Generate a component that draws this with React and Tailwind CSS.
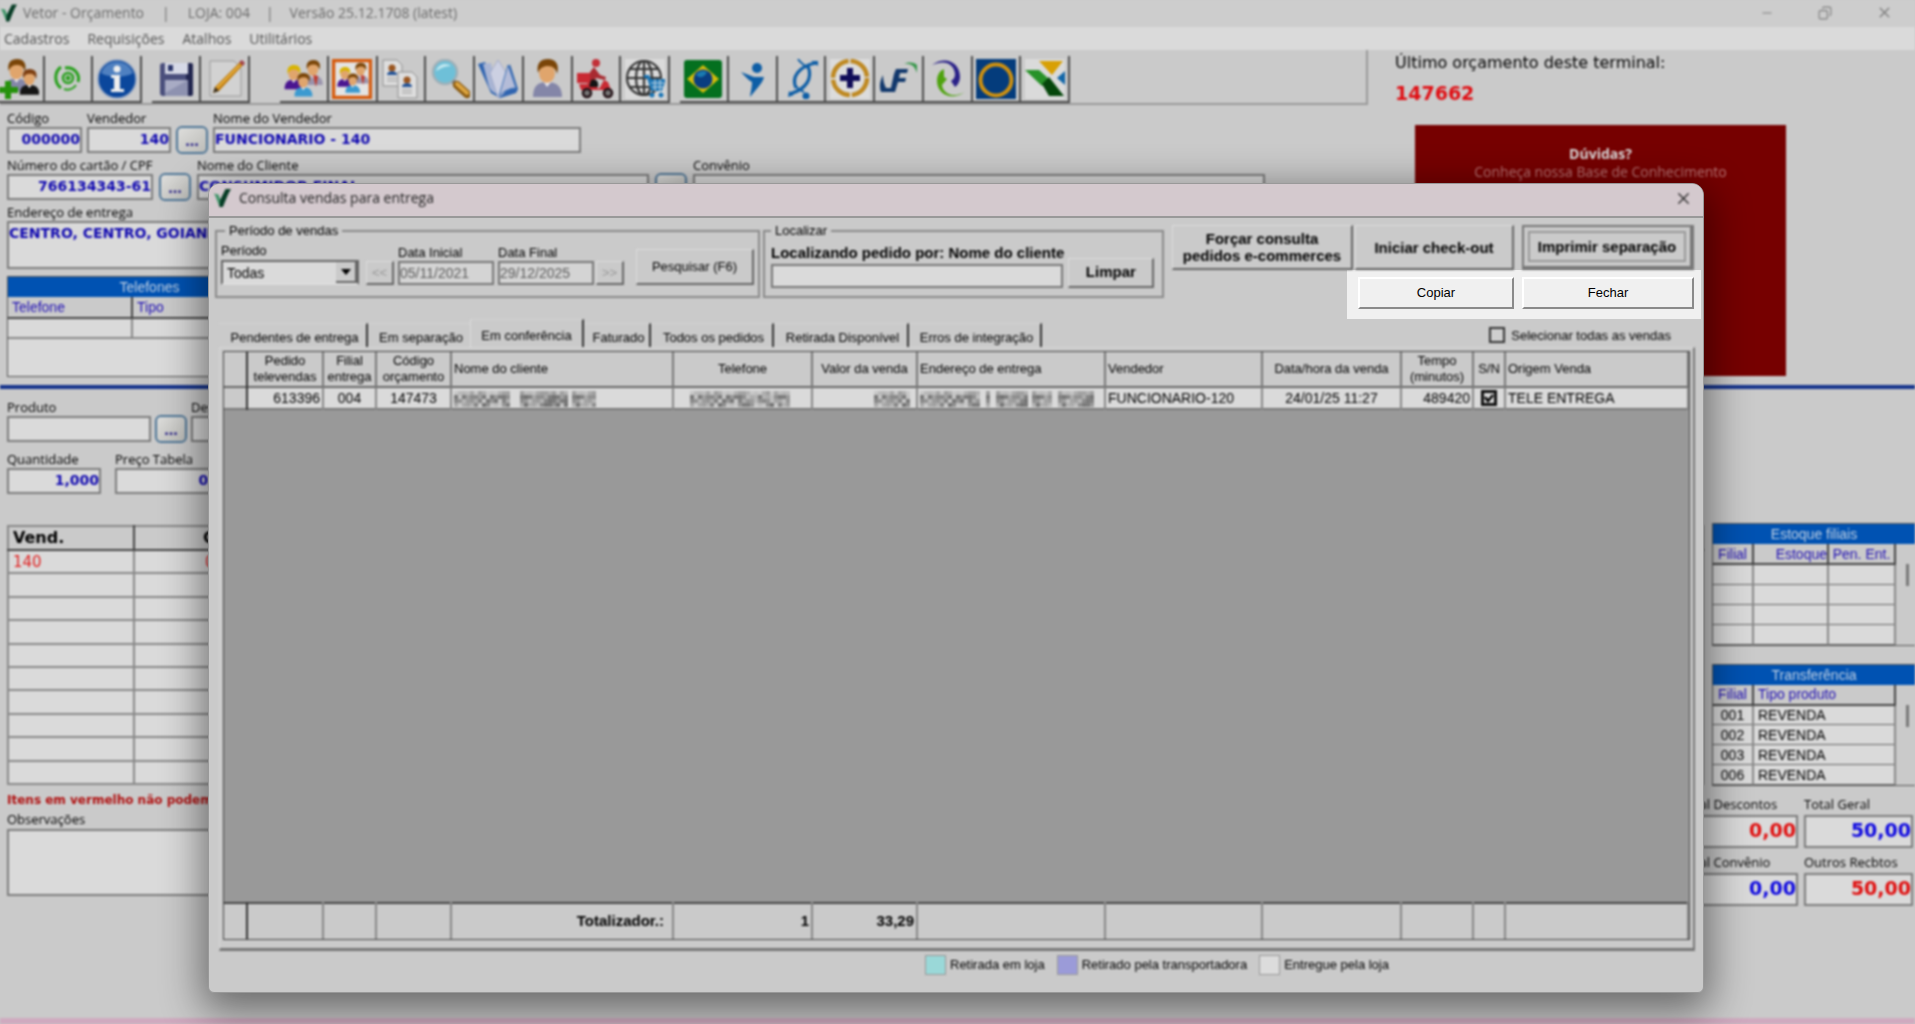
import { Minus, X, Copy } from 'lucide-react';

const columns = [
  { label: '', width: 'w-[23px]' },
  { label: 'Pedido televendas', width: 'w-[76px]', value: '613396', align: 'text-right' },
  { label: 'Filial entrega', width: 'w-[53px]', value: '004', align: 'text-center' },
  { label: 'Código orçamento', width: 'w-[75px]', value: '147473', align: 'text-center' },
  { label: 'Nome do cliente', width: 'w-[222px]', left: true, mask: [54, 0, 46, 24], total: 'Totalizador.:', pad: 'pr-2' },
  { label: 'Telefone', width: 'w-[139px]', mask: [100], align: 'text-center', total: '1' },
  { label: 'Valor da venda', width: 'w-[105px]', mask: [34], align: 'text-right', total: '33,29' },
  { label: 'Endereço de entrega', width: 'w-[188px]', left: true, mask: [60, 4, 30, 20, 36] },
  { label: 'Vendedor', width: 'w-[157px]', left: true, value: 'FUNCIONARIO-120' },
  { label: 'Data/hora da venda', width: 'w-[139px]', value: '24/01/25 11:27', align: 'text-center' },
  { label: 'Tempo (minutos)', width: 'w-[72px]', value: '489420', align: 'text-right' },
  { label: 'S/N', width: 'w-[32px]', check: true },
  { label: 'Origem Venda', width: '', left: true, value: 'TELE ENTREGA' },
];

const tabs = [
  { label: 'Pendentes de entrega', width: 'w-[149px]' },
  { label: 'Em separação', width: 'w-[102px]' },
  { label: 'Em conferência', width: 'w-[114px]', active: true },
  { label: 'Faturado', width: 'w-[67px]' },
  { label: 'Todos os pedidos', width: 'w-[123px]' },
  { label: 'Retirada Disponível', width: 'w-[135px]' },
  { label: 'Erros de integração', width: 'w-[133px]' },
];

const legend = [
  { label: 'Retirada em loja', color: 'bg-[#9ad8d8]' },
  { label: 'Retirado pela transportadora', color: 'bg-[#9b9bd8]' },
  { label: 'Entregue pela loja', color: 'bg-[#dcdcdc]' },
];

const transfers = ['001', '002', '003', '006'];

/* ---------- toolbar icons ---------- */

const Person = ({ x = 0, y = 0, s = 1, hair = '#7a4508', body = '#8486a8' }) => (
  <g transform={`translate(${x} ${y}) scale(${s})`}>
    <path d="M4 38c0-10 4-15 14-15s15 5 15 15z" fill={body} />
    <path d="M14 22l4 6 5-6z" fill="#e8e8ee" />
    <ellipse cx="18" cy="14" rx="8" ry="10" fill="#e0a56c" />
    <path d="M9 14C7 4 12 0 19 0s12 5 9 15c-1-5-4-8-9-8s-8 2-10 7z" fill={hair} />
  </g>
);

const Family = () => (
  <>
    <Person x={18} y={1} s={0.66} body="#9a94ac" />
    <path d="M30 16l3 12 2-11z" fill="#c0392b" />
    <Person x={-1} y={6} s={0.64} hair="#d8b400" body="#4a1590" />
    <Person x={9} y={14} s={0.62} body="#3b9ad0" />
  </>
);

const UserAddIcon = () => (
  <>
    <Person x={2} y={0} s={0.85} />
    <Person x={18} y={10} s={0.68} hair="#7d3f12" body="#151515" />
    <path d="M6 22h6v6h7v6h-7v6H6v-6H0v-6h6z" fill="#26920c" />
  </>
);

const RefreshIcon = () => (
  <g fill="none" stroke="#27a01c">
    <path d="M13 8C6 13 6 24 13 29" strokeWidth="3" />
    <path d="M17 9a11 11 0 0 1 13 14" strokeWidth="3" />
    <path d="M28 26a10 10 0 0 1-12 4" strokeWidth="2" />
    <circle cx="20" cy="19" r="5" strokeWidth="2.5" />
    <circle cx="20" cy="19" r="2" fill="#27a01c" />
  </g>
);

const InfoIcon = () => (
  <>
    <circle cx="20" cy="20" r="19" fill="#0b479c" stroke="#8ea2c2" strokeWidth="1.5" />
    <path d="M4 14a17 17 0 0 1 32 0c-8 5-24 5-32 0z" fill="#4f80c0" />
    <circle cx="20" cy="10" r="3.5" fill="#eee" />
    <path d="M14 16h9v14h4v3H14v-3h3V19h-3z" fill="#eee" />
  </>
);

const SaveIcon = () => (
  <>
    <rect x="4" y="4" width="33" height="33" rx="3" fill="#4a4f7c" />
    <path d="M30 4h5a2 2 0 0 1 2 2v29a2 2 0 0 1-2 2h-5z" fill="#22264f" />
    <rect x="9" y="4" width="23" height="11" fill="#d6d9e6" />
    <rect x="12" y="6" width="5" height="6" fill="#2a3469" />
    <rect x="9" y="21" width="23" height="16" fill="#8e92b0" />
    <path d="M9 21h23L9 34z" fill="#a8abc4" />
  </>
);

const EditIcon = () => (
  <>
    <path d="M5 2h24l7 7v28H5z" fill="#d2d2d2" stroke="#999" />
    <path d="M10 28L35 3l3 3-24 26-6 2z" fill="#c07c10" />
    <path d="M12 29L35 6" stroke="#f0bd48" strokeWidth="1.5" />
    <path d="M10 28l4 4-6 2z" fill="#3b3020" />
    <path d="M34 3l3-2 3 3-2 3z" fill="#a2434c" />
  </>
);

const FamilyFrameIcon = () => (
  <>
    <rect x="1.5" y="1.5" width="37" height="37" fill="#e4e4e4" stroke="#d65a0c" strokeWidth="3.5" />
    <g transform="translate(4 3) scale(.82)"><Family /></g>
  </>
);

const CardsIcon = () => (
  <>
    {[[2, 1], [17, 13]].map(([x, y]) => (
      <g key={x} transform={`translate(${x} ${y})`}>
        <path d="M0 0h14l5 5v21H0z" fill="#dedede" stroke="#8e8e8e" />
        <circle cx="9" cy="8" r="3.5" fill="#9a5620" />
        <path d="M4 15c0-5 10-5 10 0z" fill="#1f4f93" />
        <path d="M4 18h10M4 21h10" stroke="#999" />
      </g>
    ))}
  </>
);

const SearchIcon = () => (
  <>
    <circle cx="15" cy="13" r="12" fill="#6ec0d8" stroke="#9fb0b8" strokeWidth="2.5" />
    <path d="M6 12c2-7 10-9 15-5-7 0-11 3-15 5z" fill="#c3e8f0" />
    <path d="M23 22l4 4" stroke="#777" strokeWidth="4" />
    <path d="M27 26l10 9" stroke="#8b5a0f" strokeWidth="8" strokeLinecap="round" />
    <path d="M27 25l10 9" stroke="#dda642" strokeWidth="4" strokeLinecap="round" />
  </>
);

const BookIcon = () => (
  <>
    <path d="M0 5l7-2 13 30L32 5l8 25-2 4-16 5-9-5z" fill="#2f64b0" />
    <path d="M5 5l8-1 7 32c-5-3-7-4-9-8z" fill="#a9b5d4" />
    <path d="M12 14l8-13 9 14-3 19-6 5z" fill="#ccd0e2" stroke="#9aa3c4" strokeWidth=".8" />
    <path d="M30 6l8 23c-6 0-12 3-17 8z" fill="#b4bcd8" stroke="#4576b8" />
  </>
);

const UserIcon = () => <Person x={2} y={0} s={1} />;

const ScooterIcon = () => (
  <>
    <circle cx="20" cy="4" r="4" fill="#c23038" />
    <path d="M18 8l6 8 6 2-1 3-9-2-4 8h-5l3-14z" fill="#a82a30" />
    <rect x="1" y="14" width="13" height="10" fill="#c92a33" />
    <path d="M3 25h14l6 5 5-9 4 2 3 8H5z" fill="#c92a33" />
    <path d="M15 21c5-2 8 1 7 7h-9z" fill="#141414" />
    <circle cx="11" cy="34" r="4" fill="#777" stroke="#221015" strokeWidth="2.5" />
    <circle cx="32" cy="34" r="4" fill="#777" stroke="#221015" strokeWidth="2.5" />
  </>
);

const GlobeCartIcon = () => (
  <>
    <rect width="40" height="40" fill="#dadada" />
    <g fill="none" stroke="#333" strokeWidth="2.2">
      <circle cx="19" cy="19" r="17" />
      <ellipse cx="19" cy="19" rx="8" ry="17" />
      <path d="M19 2v34M2 19h34M5 10h28M5 28h28" />
    </g>
    <path d="M19 16h5l2 4h15l-4 12H26l-4-13h-3z" fill="#1c76b6" />
    <path d="M26 24h13M27 28h11M30 20v12M35 20v12" stroke="#cfdce6" strokeWidth="1" />
    <circle cx="27" cy="36" r="2.5" fill="#1c76b6" />
    <circle cx="36" cy="36" r="2.5" fill="#1c76b6" />
  </>
);

const BrazilIcon = () => (
  <>
    <rect x="1" y="1" width="38" height="38" rx="3" fill="#04701f" />
    <path d="M20 6l16 14-16 14L4 20z" fill="#d3bd0c" />
    <circle cx="20" cy="20" r="9.5" fill="#0a3d80" />
    <path d="M13 16a8 8 0 0 1 11-3c-2 5-7 7-11 3z" fill="#1a7ab0" />
  </>
);

const RunnerIcon = () => (
  <g fill="#0e5ea6">
    <circle cx="25" cy="9" r="5" />
    <path d="M9 13l13 5h10c-1 5-5 9-14 20 1-7 2-10 2-15-4-2-7-6-11-10z" />
  </g>
);

const HelixIcon = () => (
  <>
    <g fill="none" stroke="#0e5ea6" strokeWidth="3.2">
      <path d="M35 4C18 7 10 18 15 29" />
      <path d="M9 35c16-5 23-15 18-28" />
      <path d="M17 0c3 5 6 5 9 9M15 27c2 4 5 4 8 6" strokeWidth="2" />
    </g>
    <path d="M30 2h7v5zM8 32l-1 6 6-2z" fill="#0e5ea6" />
    <circle cx="25" cy="37" r="3.5" fill="#0e5ea6" />
  </>
);

const HealthIcon = () => (
  <>
    <rect width="40" height="40" fill="#dcdcdc" />
    <circle cx="20" cy="19" r="17" fill="none" stroke="#bf8922" strokeWidth="4.5" strokeDasharray="24.7 2" />
    <path d="M17 9h6v7h7v6h-7v7h-6v-7h-7v-6h7z" fill="#100c58" />
  </>
);

const FlagLetterIcon = () => (
  <>
    <path d="M18 10h12l-1 4h-7l-1 5h7l-1 4h-7l-3 10h-5l4-18z" fill="#12386c" />
    <path d="M5 16c-3 6-4 11-2 17h12l1-4H8c-2-4-3-8-3-13z" fill="#12386c" />
    <path d="M26 5c8-1 11 3 13 9V6c-4-3-8-3-13-1z" fill="#37974a" />
  </>
);

const SwirlIcon = () => (
  <>
    <path d="M5 6c14-10 28-2 28 12 0 4-2 8-5 10l-4-6c3-2 4-4 4-7C27 5 18 0 5 6z" fill="#2a2188" />
    <path d="M38 33c-15 10-28 1-28-11 0-5 2-10 7-12v8l3 2-5 6c1 8 10 14 23 7z" fill="#4fa30f" />
  </>
);

const RingIcon = () => (
  <>
    <rect width="40" height="40" fill="#043c7c" />
    <circle cx="20" cy="21" r="15.5" fill="none" stroke="#cf910f" strokeWidth="4" />
  </>
);

const KiteIcon = () => (
  <>
    <rect width="40" height="40" fill="#dadada" />
    <path d="M14 2h24L27 16z" fill="#d8a005" />
    <path d="M0 11h14l10 9-7 7z" fill="#279228" />
    <path d="M17 25l7-7 15 19H24z" fill="#05460b" />
    <path d="M40 12v14l-8-7z" fill="#1266a8" />
  </>
);

const IconButton = ({ name, icon: Glyph }) => (
  <button type="button" aria-label={name} className="h-[47px] flex-1 flex items-center justify-center border-r-2 border-b-2 border-[#4c4c4c]">
    <svg viewBox="0 0 40 40" className="size-10">
      <Glyph />
    </svg>
  </button>
);

const toolGroups = [
  {
    width: 'w-[146px] -ml-1',
    items: [['Clientes', UserAddIcon], ['Atualizar', RefreshIcon], ['Informações', InfoIcon]],
  },
  {
    width: 'w-[98px] ml-2.5',
    items: [['Salvar', SaveIcon], ['Editar', EditIcon]],
  },
  {
    width: 'w-[390px] ml-7.5',
    items: [
      ['Grupo', Family], ['Grupo destacado', FamilyFrameIcon], ['Cartões', CardsIcon], ['Pesquisar', SearchIcon],
      ['Catálogo', BookIcon], ['Usuário', UserIcon], ['Entregas', ScooterIcon], ['Loja virtual', GlobeCartIcon],
    ],
  },
  {
    width: 'w-[390px] ml-2.5',
    items: [
      ['Farmácia popular', BrazilIcon], ['Convênio saúde', RunnerIcon], ['Laboratório', HelixIcon], ['Plano saúde', HealthIcon],
      ['Programa fidelidade', FlagLetterIcon], ['Recarga', SwirlIcon], ['Rede', RingIcon], ['Parceiros', KiteIcon],
    ],
  },
];

/* ---------- shared pieces ---------- */

const CheckLogo = ({ className }) => (
  <svg viewBox="0 0 20 22" className={className}>
    <path d="M1 6l5 1 3 8-1 6C5 17 4 10 1 6z" fill="#3f9468" />
    <path d="M7 21l1-8L14 1h6c-4 6-6 13-9 20z" fill="#063c25" />
  </svg>
);

const Field = ({ id, label, value = '', width, align = 'text-right' }) => (
  <div className={`shrink-0 ${width}`}>
    <label htmlFor={id} className="block text-[13px] leading-[18px] whitespace-nowrap">{label}</label>
    <input
      id={id}
      defaultValue={value}
      className={`block w-full h-[26px] pb-0.5 border-2 border-[#7c7c7c] bg-[#dadada] font-['DejaVu_Sans'] font-bold text-sm text-[#1008b0] ${align}`}
    />
  </div>
);

const MoreButton = ({ name }) => (
  <button
    type="button"
    aria-label={name}
    className="shrink-0 self-end w-8 h-[28px] -mb-px rounded-md border-2 border-[#4f7697] bg-gradient-to-br from-[#dededc] to-[#bcbcb8] font-bold text-base leading-5 text-[#2b2488]"
  >
    ...
  </button>
);

const TotalField = ({ id, label, value, color, width }) => (
  <div className={width}>
    <label htmlFor={id} className="block text-[13px] leading-[22px] whitespace-nowrap">{label}</label>
    <input
      id={id}
      defaultValue={value}
      className={`block w-full h-[33px] pb-1 border-2 border-[#7c7c7c] bg-[#dadada] text-right font-['DejaVu_Sans'] font-bold text-[19px] ${color}`}
    />
  </div>
);

// Mosaic strip that hides customer data
const Masked = ({ groups }) => {
  const width = groups.reduce((sum, g) => sum + g + 6, 0);
  const cells = [];
  let x = 0;
  groups.forEach((g, gi) => {
    for (let i = 0; i < g; i += 4) {
      for (let r = 0; r < 4; r += 1) {
        const tone = ((i * i * 13 + r * r * 29 + gi * 41 + i * r * 7) * 17) % 100;
        cells.push({ x: x + i, y: r * 4, tone: r === 0 ? tone / 2 : tone });
      }
    }
    x += g + 6;
  });
  return (
    <svg width={width} height="16" className="inline-block align-middle max-w-full" aria-hidden="true">
      {cells.map((c) => (
        <rect key={`${c.x}-${c.y}`} x={c.x} y={c.y} width="4" height="4" fill="#333" opacity={0.1 + c.tone / 190} />
      ))}
    </svg>
  );
};

const RaisedButton = ({ children, className = '' }) => (
  <button type="button" className={`border-t border-l border-t-[#dedede] border-l-[#dedede] border-r-2 border-b-2 border-r-[#666] border-b-[#666] ${className}`}>
    {children}
  </button>
);

/* ---------- main window ---------- */

const MainWindow = () => (
  <div className="blur-[1px] min-h-screen flex flex-col bg-[#cacaca] text-black font-['Open_Sans',sans-serif]">
    <header className="h-[27px] pb-0.5 flex items-center bg-[#cdcdcd] text-sm text-[#6c6c6c]">
      <CheckLogo className="w-[17px] h-[20px] mr-1.5" />
      <span>Vetor - Orçamento</span>
      <span className="mx-[18px]">|</span>
      <span>LOJA: 004</span>
      <span className="mx-4">|</span>
      <span>Versão 25.12.1708 (latest)</span>
      <div className="ml-auto mr-[22px] flex items-center gap-11 text-[#808080]">
        <button type="button" aria-label="Minimizar"><Minus size={14} /></button>
        <button type="button" aria-label="Restaurar"><Copy size={14} className="-scale-x-100" /></button>
        <button type="button" aria-label="Fechar janela"><X size={17} /></button>
      </div>
    </header>
    <nav className="h-[23px] flex items-center gap-[18px] px-1 bg-[#dadada] text-sm text-[#555]">
      {['Cadastros', 'Requisições', 'Atalhos', 'Utilitários'].map((item) => (
        <button type="button" key={item}>{item}</button>
      ))}
    </nav>

    <section className="h-[335px] flex">
      <div className="flex-1 min-w-0">
        <div className="h-[55px] flex items-end border-r-2 border-b-2 border-[#999]">
          {toolGroups.map((group) => (
            <div key={group.width} className={`flex shrink-0 ${group.width}`}>
              {group.items.map(([name, icon]) => <IconButton key={name} name={name} icon={icon} />)}
            </div>
          ))}
        </div>
        <div className="flex flex-col gap-[3px] pt-1 px-[7px]">
          <div className="flex gap-[5px]">
            <Field id="codigo" label="Código" value="000000" width="w-[75px]" />
            <Field id="vendedor" label="Vendedor" value="140" width="w-[84px]" />
            <MoreButton name="Buscar vendedor" />
            <Field id="nome-vendedor" label="Nome do Vendedor" value="FUNCIONARIO - 140" width="w-[368px]" align="text-left" />
          </div>
          <div className="flex gap-1.5">
            <Field id="cpf" label="Número do cartão / CPF" value="766134343-61" width="w-[146px]" />
            <MoreButton name="Buscar cartão" />
            <Field id="nome-cliente" label="Nome do Cliente" value="CONSUMIDOR FINAL" width="w-[452px]" align="text-left" />
            <MoreButton name="Buscar cliente" />
            <Field id="convenio" label="Convênio" width="w-[572px]" />
          </div>
          <div>
            <label htmlFor="endereco" className="block text-[13px] leading-[18px]">Endereço de entrega</label>
            <textarea
              id="endereco"
              defaultValue="CENTRO, CENTRO, GOIANIA"
              className="block w-[641px] h-[48px] resize-none border-2 border-[#7c7c7c] bg-[#dadada] font-['DejaVu_Sans'] font-bold text-sm text-[#1008b0]"
            />
          </div>
          <div className="mt-1 w-[285px] h-[101px] border border-[#555] bg-[#dadada] font-['Liberation_Sans'] text-sm">
            <div className="h-5 bg-[#0052b2] text-center leading-5 text-[#c2d2e4]">Telefones</div>
            <table className="w-full table-fixed border-collapse">
              <thead>
                <tr className="h-[21px] bg-[#cacaca] text-left text-[#2010b4] border-b-2 border-[#444]">
                  <th className="w-[124px] pl-1 font-normal border-r-2 border-[#444]">Telefone</th>
                  <th className="pl-1 font-normal">Tipo</th>
                </tr>
              </thead>
              <tbody>
                <tr className="h-5 border-b-2 border-[#888]">
                  <td className="border-r-2 border-[#888]" />
                  <td />
                </tr>
              </tbody>
            </table>
          </div>
        </div>
      </div>

      <aside className="w-[547px] pl-[27px] pt-px shrink-0 font-['DejaVu_Sans']">
        <p className="text-[16px] leading-6">Último orçamento deste terminal:</p>
        <p className="mt-1.5 text-[19px] leading-6 font-bold text-[#e00d12]">147662</p>
        <a href="#ajuda" className="block mt-5 ml-5 w-[371px] h-[251px] pt-5 bg-[#760000] text-center text-sm leading-[18px] font-['Open_Sans'] text-[#b97676]">
          <strong className="block text-[#ddd]">Dúvidas?</strong>
          Conheça nossa Base de Conhecimento
        </a>
      </aside>
    </section>

    <hr className="border-0 h-1 shrink-0 bg-[#15338c]" />

    <section className="h-[136px] flex flex-col gap-2 pt-[9px] px-[7px]">
      <div className="flex gap-1">
        <Field id="produto" label="Produto" width="w-[144px]" />
        <MoreButton name="Buscar produto" />
        <Field id="descricao" label="Descrição" width="w-[600px]" />
      </div>
      <div className="flex gap-3.5">
        <Field id="quantidade" label="Quantidade" value="1,000" width="w-[94px]" />
        <Field id="preco" label="Preço Tabela" value="0,00" width="w-[120px]" />
      </div>
    </section>

    <section className="flex items-start">
      <table className="flex-1 ml-[7px] mr-2 h-[260px] table-fixed border-collapse border-2 border-[#888] bg-[#dadada] font-['DejaVu_Sans']">
        <thead>
          <tr className="h-6 bg-[#cacaca] text-left text-black border-b-2 border-[#444]">
            <th className="w-[126px] pl-1 text-base leading-5 border-r-2 border-[#444]">Vend.</th>
            <th className="w-[1571px] pl-[68px] text-base leading-5">Código</th>
          </tr>
        </thead>
        <tbody>
          {[...Array(10)].map((_, i) => (
            <tr key={i} className="h-[23px] border-b-2 border-[#888] text-[15px] leading-4 text-[#e02020]">
              <td className="h-[23px] pl-1 border-r-2 border-[#888]">{i === 0 && '140'}</td>
              <td className="h-[23px] pl-[70px]">{i === 0 && '0'}</td>
            </tr>
          ))}
        </tbody>
      </table>
      <aside className="w-[203px] shrink-0 flex flex-col gap-[18px] -mt-0.5 font-['Liberation_Sans'] text-sm">
        <div className="flex flex-col border-t border-l border-b border-[#555]">
          <div className="h-5 bg-[#0052b2] text-center leading-5 text-[#c2d2e4]">Estoque filiais</div>
          <div className="flex items-start">
            <table className="w-[183px] table-fixed border-collapse bg-[#dadada] leading-[18px]">
              <thead>
                <tr className="h-5 bg-[#cacaca] text-[#2010b4] border-b-2 border-[#444]">
                  <th className="w-10 font-normal border-r-2 border-[#444]">Filial</th>
                  <th className="w-[75px] text-right font-normal border-r-2 border-[#444]">Estoque</th>
                  <th className="font-normal whitespace-nowrap border-r-2 border-[#444]">Pen. Ent.</th>
                </tr>
              </thead>
              <tbody>
                {[...Array(4)].map((_, i) => (
                  <tr key={i} className="h-5 border-b border-[#666]">
                    <td className="border-r-2 border-[#888]" />
                    <td className="border-r-2 border-[#888]" />
                    <td className="border-r-2 border-[#888]" />
                  </tr>
                ))}
              </tbody>
            </table>
            <span className="w-[3px] h-[22px] mt-5 ml-2.5 bg-[#777]" />
          </div>
        </div>
        <div className="flex flex-col border-t border-l border-b border-[#555]">
          <div className="h-5 bg-[#0052b2] text-center leading-5 text-[#c2d2e4]">Transferência</div>
          <div className="flex items-start">
            <table className="w-[183px] table-fixed border-collapse bg-[#dadada] leading-[18px]">
              <thead>
                <tr className="h-5 bg-[#cacaca] text-[#2010b4] border-b-2 border-[#444]">
                  <th className="w-10 font-normal border-r-2 border-[#444]">Filial</th>
                  <th className="pl-1 text-left font-normal border-r-2 border-[#444]">Tipo produto</th>
                </tr>
              </thead>
              <tbody>
                {transfers.map((code) => (
                  <tr key={code} className="h-5 border-b border-[#666]">
                    <td className="text-center border-r-2 border-[#888]">{code}</td>
                    <td className="pl-1 border-r-2 border-[#888]">REVENDA</td>
                  </tr>
                ))}
              </tbody>
            </table>
            <span className="w-[3px] h-[22px] mt-5 ml-2.5 bg-[#777]" />
          </div>
        </div>
      </aside>
    </section>

    <section className="flex justify-between pt-[5px] pl-[7px] pr-0.5">
      <div>
        <p className="font-['DejaVu_Sans'] font-bold text-xs leading-[18px] text-[#b01010]">Itens em vermelho não podem ser vendidos</p>
        <label htmlFor="obs" className="block text-[13px] leading-5">Observações</label>
        <textarea id="obs" className="block w-[641px] h-[67px] resize-none border-2 border-[#7c7c7c] bg-[#dadada]" />
      </div>
      <div className="flex flex-col gap-[3px] pt-0.5">
        <div className="flex gap-1.5">
          <TotalField id="descontos" label="Total Descontos" value="0,00" color="text-[#e01010]" width="w-[118px]" />
          <TotalField id="geral" label="Total Geral" value="50,00" color="text-[#100ae0]" width="w-[109px]" />
        </div>
        <div className="flex gap-1.5">
          <TotalField id="total-convenio" label="Total Convênio" value="0,00" color="text-[#100ae0]" width="w-[118px]" />
          <TotalField id="recebimentos" label="Outros Recbtos" value="50,00" color="text-[#e01010]" width="w-[109px]" />
        </div>
      </div>
    </section>

    <div className="mt-auto h-1.5 bg-[#cfaabf]" />
  </div>
);

/* ---------- delivery dialog ---------- */

const DateField = ({ id, label, value }) => (
  <div>
    <label htmlFor={id} className="block leading-4">{label}</label>
    <input id={id} disabled defaultValue={value} className="block w-24 h-6 border-2 border-[#777] bg-[#d4d4d4] text-sm text-[#5c5c5c]" />
  </div>
);

const SearchPanel = () => (
  <div className="flex flex-1 gap-[3px] pt-px blur-[1px]">
    <fieldset className="w-[545px] h-[75px] border-2 border-[#8a8a8a] px-1">
      <legend className="ml-1 px-1 leading-4">Período de vendas</legend>
      <div className="mt-[3px] flex items-end">
        <div className="w-[138px]">
          <label htmlFor="periodo" className="block leading-[18px]">Período</label>
          <div className="relative">
            <select id="periodo" defaultValue="Todas" className="block w-full h-[25px] pl-1 appearance-none border-2 border-[#666] border-b-[#ddd] bg-[#dadada] text-sm">
              <option>Todas</option>
            </select>
            <span className="absolute right-0.5 top-0.5 w-[21px] h-[21px] flex items-center justify-center pointer-events-none bg-[#cacaca] border-r-2 border-b-2 border-[#666]">
              <svg viewBox="0 0 10 6" className="w-2.5 h-1.5"><path d="M0 0h10L5 6z" /></svg>
            </span>
          </div>
        </div>
        <RaisedButton className="ml-[7px] w-7 h-6 text-[#999]">&lt;&lt;</RaisedButton>
        <div className="ml-1 mr-0.5 flex gap-1">
          <DateField id="data-inicial" label="Data Inicial" value="05/11/2021" />
          <DateField id="data-final" label="Data Final" value="29/12/2025" />
        </div>
        <RaisedButton className="w-7 h-6 text-[#999]">&gt;&gt;</RaisedButton>
        <RaisedButton className="ml-3 w-[118px] h-9">Pesquisar (F6)</RaisedButton>
      </div>
    </fieldset>

    <fieldset className="w-[401px] h-[75px] border-2 border-[#8a8a8a] px-1.5">
      <legend className="px-1 leading-4">Localizar</legend>
      <div className="mt-[3px] flex items-end gap-1">
        <div>
          <label htmlFor="localizar" className="block font-bold text-[15px] leading-[22px] whitespace-nowrap">Localizando pedido por: Nome do cliente</label>
          <input id="localizar" className="block w-[292px] h-6 border-2 border-[#777] bg-[#dadada]" />
        </div>
        <RaisedButton className="w-[86px] h-[30px] font-bold text-[15px]">Limpar</RaisedButton>
      </div>
    </fieldset>
  </div>
);

const SalesTable = () => (
  <div className="flex-1 flex flex-col border border-[#444] bg-[#999]">
    <table className="w-full table-fixed border-collapse">
      <thead>
        <tr className="h-[35px] bg-[#cacaca] border-b-2 border-[#666]">
          {columns.map((c, i) => (
            <th key={i} className={`${c.width} ${c.left ? 'text-left pl-0.5' : 'text-center px-0.5'} leading-4 font-normal border-r-2 ${i === 0 ? 'border-[#333]' : 'border-[#777]'}`}>
              {c.label}
            </th>
          ))}
        </tr>
      </thead>
      <tbody>
        <tr className="h-[22px] bg-[#dadada] text-sm leading-[18px] border-b-2 border-[#777]">
          {columns.map((c, i) => (
            <td key={i} className={`px-0.5 whitespace-nowrap overflow-hidden border-r-2 ${c.align || ''} ${i === 0 ? 'bg-[#cacaca] border-[#333]' : 'border-[#888]'}`}>
              {c.mask && <Masked groups={c.mask} />}
              {c.check && (
                <span className="relative block mx-auto size-4">
                  <input
                    type="checkbox"
                    defaultChecked
                    aria-label="Selecionar venda"
                    className="block appearance-none size-4 border-3 border-[#111] bg-[#dadada]"
                  />
                  <svg viewBox="0 0 16 16" className="absolute inset-0 size-4 pointer-events-none">
                    <path d="M4 7l3 4 5-6" fill="none" stroke="#000" strokeWidth="2.5" />
                  </svg>
                </span>
              )}
              {c.value}
            </td>
          ))}
        </tr>
      </tbody>
    </table>
    <div className="flex-1" />
    <table className="w-full table-fixed border-collapse">
      <tbody>
        <tr className="h-9 bg-[#cacaca] border-t-2 border-[#444] text-right font-bold text-[15px] text-black">
          {columns.map((c, i) => (
            <td key={i} className={`${c.width} ${c.pad || 'pr-0.5'} border-r-2 ${i === 0 ? 'border-[#333]' : 'border-[#888]'}`}>{c.total}</td>
          ))}
        </tr>
      </tbody>
    </table>
  </div>
);

const tabShape = (tab) => {
  if (tab.active) return 'h-7 pt-1 border-l border-l-[#ddd] border-r-2';
  if (tab.label === 'Em separação') return 'h-6 pt-1 pl-1';
  return 'h-6 pt-1 pl-1 border-r-2';
};

const DeliveryDialog = () => (
  <div
    role="dialog"
    aria-label="Consulta vendas para entrega"
    className="absolute left-[208px] right-[211px] top-[183px] bottom-[31px] flex flex-col rounded-t-xl rounded-b-md border border-[#999] bg-[#cacaca] shadow-[0_12px_40px_6px_rgba(0,0,0,0.48)] overflow-hidden font-['Liberation_Sans'] text-[13px] text-black"
  >
    <div className="h-[34px] shrink-0 bg-[#d4c9ce] border-b-2 border-[#999]">
      <div className="h-full flex items-center px-1 pb-1 blur-[1px] font-['Open_Sans'] text-sm text-[#222]">
        <CheckLogo className="w-[18px] h-[20px] mr-2" />
        <span>Consulta vendas para entrega</span>
        <button type="button" aria-label="Fechar consulta" className="ml-auto mr-1.5"><X size={19} strokeWidth={1.5} /></button>
      </div>
    </div>

    <div className="flex justify-between pl-1.5 pt-1 pr-0.5">
      <SearchPanel />
      <div className="shrink-0 flex flex-col items-end">
        <div className="flex pt-[3px] pr-[7px] blur-[1px] h-12 font-bold text-[15px] leading-[17px]">
          <RaisedButton className="w-[181px] h-[45px]">Forçar consulta<br />pedidos e-commerces</RaisedButton>
          <RaisedButton className="ml-0.5 w-[159px] h-[45px]">Iniciar check-out</RaisedButton>
          <button type="button" className="ml-2 w-[172px] h-[45px] p-1 border-2 border-[#777] border-r-4 border-b-4">
            <span className="flex h-full items-center justify-center border-2 border-[#999]">Imprimir separação</span>
          </button>
        </div>
        <div className="h-[49px] w-[354px] flex gap-2 pt-[7px] px-[11px] pr-[7px] bg-[#f0f0f0] text-black">
          <button type="button" className="h-8 w-[156px] border-2 border-t-white border-l-white border-r-[#8a8a8a] border-b-[#8a8a8a]">Copiar</button>
          <button type="button" className="h-8 flex-1 border-2 border-t-white border-l-white border-r-[#8a8a8a] border-b-[#8a8a8a]">Fechar</button>
        </div>
      </div>
    </div>

    <div className="flex-1 flex flex-col blur-[1px] pl-2.5 pr-2 pb-[9px]">
      <div className="flex items-end">
        <div role="tablist" className="flex items-end">
          {tabs.map((tab) => (
            <button
              type="button"
              role="tab"
              aria-selected={!!tab.active}
              key={tab.label}
              className={`${tab.width} ${tabShape(tab)} border-r-[#333] border-t border-t-[#d4d4d4] text-center whitespace-nowrap`}
            >
              {tab.label}
            </button>
          ))}
        </div>
        <label className="ml-auto mr-6 mb-0.5 flex items-center gap-1.5">
          <input type="checkbox" className="appearance-none size-4 border-2 border-[#333] bg-[#cfcfcf]" />
          Selecionar todas as vendas
        </label>
      </div>
      <div className="flex-1 flex flex-col pt-[3px] px-[3px] pb-2 border-t border-l border-[#d8d8d8] border-r-2 border-b-3 border-r-[#777] border-b-[#777]">
        <SalesTable />
      </div>
      <div className="flex gap-3 mt-1 mb-2 ml-[706px]">
        {legend.map((item) => (
          <span key={item.label} className="flex items-center gap-1">
            <i className={`w-[21px] h-5 border border-[#999] ${item.color}`} />
            {item.label}
          </span>
        ))}
      </div>
    </div>
  </div>
);

const App = () => (
  <main className="relative min-h-screen overflow-hidden bg-[#cacaca]">
    <MainWindow />
    <DeliveryDialog />
  </main>
);

export default App;
